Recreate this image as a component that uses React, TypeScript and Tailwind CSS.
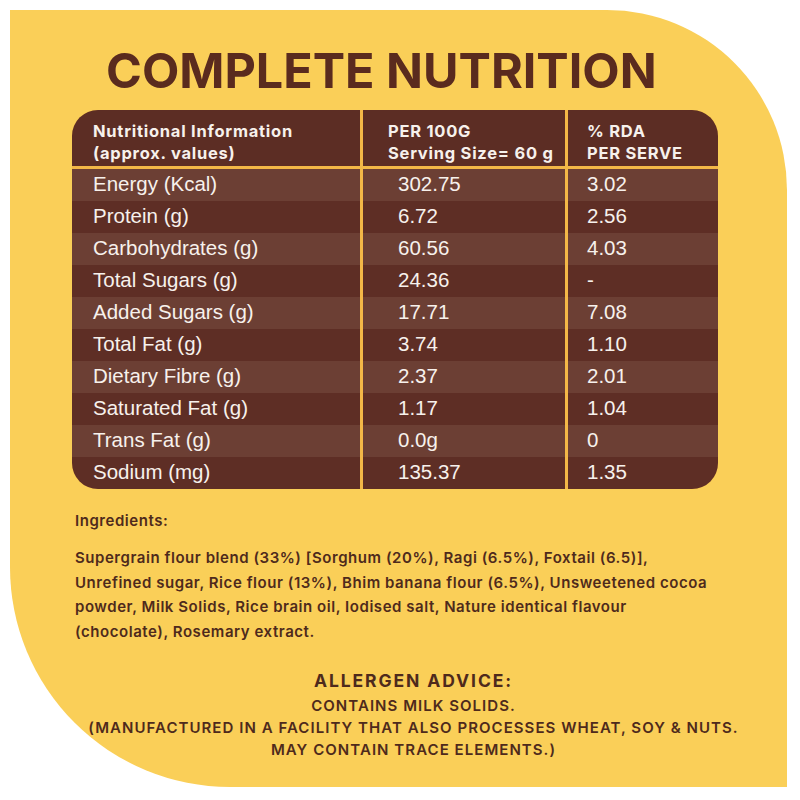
const rows = [
  ['Energy (Kcal)', '302.75', '3.02'],
  ['Protein (g)', '6.72', '2.56'],
  ['Carbohydrates (g)', '60.56', '4.03'],
  ['Total Sugars (g)', '24.36', '-'],
  ['Added Sugars (g)', '17.71', '7.08'],
  ['Total Fat (g)', '3.74', '1.10'],
  ['Dietary Fibre (g)', '2.37', '2.01'],
  ['Saturated Fat (g)', '1.17', '1.04'],
  ['Trans Fat (g)', '0.0g', '0'],
  ['Sodium (mg)', '135.37', '1.35'],
];

const geo = { fontFamily: 'Inter, "Noto Sans", sans-serif' };
const arial = { fontFamily: '"Liberation Sans", Arial, sans-serif' };

export default function App() {
  return (
    <div className="w-[800px] h-[800px] bg-white p-[10px]">
      <div
        className="w-[777px] h-[777px] bg-[#FACF58] rounded-tr-[180px] rounded-bl-[220px] text-[#4E2A1C]"
        style={geo}
      >
        <h1 className="pt-[33px] pl-[96px] text-[48.5px] leading-[56px] font-bold text-[#5A2B1E]">
          COMPLETE NUTRITION
        </h1>

        {/* table */}
        <div className="mt-[11px] ml-[62px] w-[646px] rounded-[26px] overflow-hidden bg-[#F3B747] text-[#F7F1EC]">
          <div className="grid grid-cols-[288px_202px_1fr] gap-x-[3px] h-[56px] text-[16.5px] font-bold leading-[22px] tracking-[0.75px]">
            <div className="bg-[#5C2D24] pl-[21px] pt-[8px] flex flex-col justify-center">
              <span>Nutritional Information</span>
              <span>(approx. values)</span>
            </div>
            <div className="bg-[#5C2D24] pl-[25px] pt-[8px] flex flex-col justify-center">
              <span>PER 100G</span>
              <span>Serving Size= 60 g</span>
            </div>
            <div className="bg-[#5C2D24] pl-[19px] pt-[8px] flex flex-col justify-center">
              <span>% RDA</span>
              <span>PER SERVE</span>
            </div>
          </div>
          <div className="mt-[3px]" style={arial}>
            {rows.map((r, i) => {
              const bg = i % 2 === 0 ? 'bg-[#6C3F34]' : 'bg-[#5E2E25]';
              return (
                <div key={r[0]} className="grid grid-cols-[288px_202px_1fr] gap-x-[3px] h-[32px] text-[20.5px]">
                  <div className={`${bg} pl-[21px] flex items-center pb-[3px]`}>{r[0]}</div>
                  <div className={`${bg} pl-[35px] flex items-center pb-[3px]`}>{r[1]}</div>
                  <div className={`${bg} pl-[19px] flex items-center pb-[3px]`}>{r[2]}</div>
                </div>
              );
            })}
          </div>
        </div>

        {/* ingredients */}
        <div className="pl-[65px] pr-[20px] mt-[20px] text-[15px] font-semibold tracking-[0.55px]">
          <p className="leading-[24px]">Ingredients:</p>
          <p className="mt-[13px] leading-[24.5px] whitespace-nowrap">
            Supergrain flour blend (33%) [Sorghum (20%), Ragi (6.5%), Foxtail (6.5)],
            <br />
            Unrefined sugar, Rice flour (13%), Bhim banana flour (6.5%), Unsweetened cocoa
            <br />
            powder, Milk Solids, Rice brain oil, Iodised salt, Nature identical flavour
            <br />
            (chocolate), Rosemary extract.
          </p>
        </div>

        {/* allergen */}
        <div className="mt-[25px] pl-[30px] text-center font-semibold whitespace-nowrap">
          <p className="text-[17.5px] font-bold leading-[24px] tracking-[1.9px]">ALLERGEN ADVICE:</p>
          <p className="mt-[2px] text-[15px] leading-[22px] tracking-[1.05px]">
            CONTAINS MILK SOLIDS.
            <br />
            (MANUFACTURED IN A FACILITY THAT ALSO PROCESSES WHEAT, SOY &amp; NUTS.
            <br />
            MAY CONTAIN TRACE ELEMENTS.)
          </p>
        </div>
      </div>
    </div>
  );
}
